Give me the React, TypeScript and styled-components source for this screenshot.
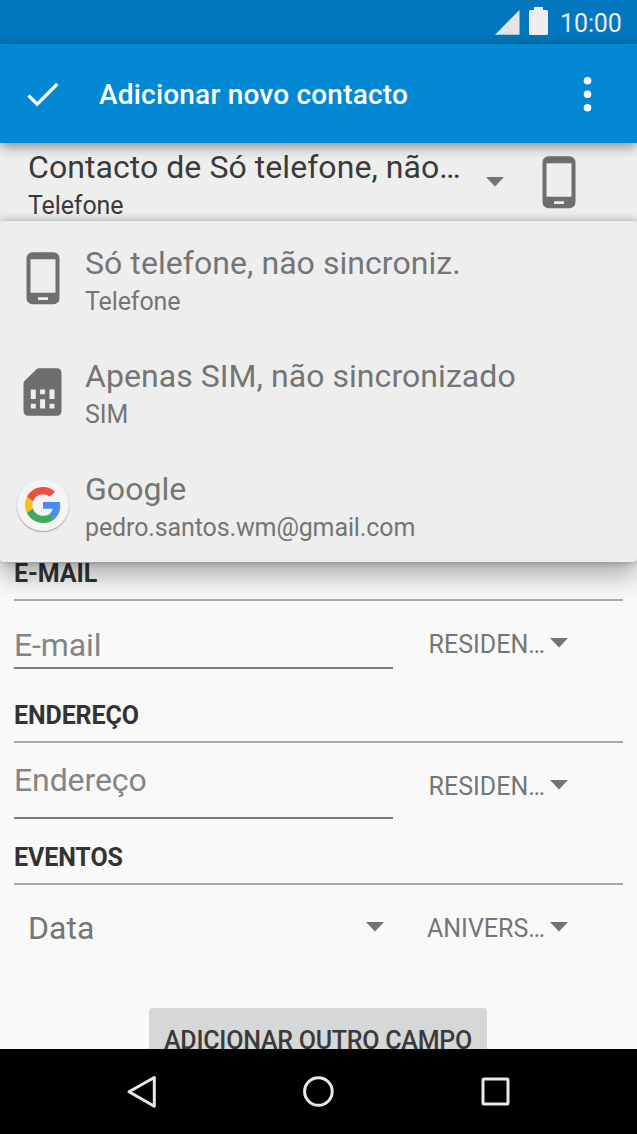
import styled, { createGlobalStyle } from "styled-components";

const GlobalStyle = createGlobalStyle`
	* {
		box-sizing: border-box;
	}

	body {
		margin: 0;
		font-family: Roboto, "Liberation Sans", sans-serif;
		background: #000;
	}

	svg {
		display: block;
		flex: none;
	}
`;

const Screen = styled.div`
	width: 637px;
	height: 1134px;
	display: flex;
	flex-direction: column;
	overflow: hidden;
	background: #f9f9f9;
`;

const StatusBar = styled.div`
	flex: none;
	height: 44px;
	padding-right: 15px;
	display: flex;
	align-items: center;
	justify-content: flex-end;
	background: #0277bd;
	color: #e3eef6;
	font-size: 25px;
	line-height: 42px;
`;

const Clock = styled.span`
	width: 62px;
	margin-left: 12px;
	letter-spacing: -0.1px;
	padding-top: 4px;
`;

const Toolbar = styled.header`
	position: relative;
	z-index: 1;
	flex: none;
	height: 99px;
	padding: 0 32px 0 21px;
	display: flex;
	align-items: center;
	background: #0388d3;
	color: #fff;
	box-shadow: 0 3px 12px rgba(0, 0, 0, 0.45);
`;

const ToolbarTitle = styled.h1`
	flex: 1;
	margin: 2px 0 0 34px;
	font-size: 28px;
	font-weight: 500;
	line-height: 40px;
	letter-spacing: 0.2px;
`;

const IconButton = styled.button`
	padding: 0;
	border: none;
	background: none;
	color: inherit;
`;

const Content = styled.main`
	position: relative;
	flex: 1;
	min-height: 0;
	overflow: hidden;
`;

const AccountHeader = styled.div`
	height: 78px;
	padding: 5px 61px 0 28px;
	display: flex;
	align-items: flex-start;
	background: #eee;
	color: #3a3a3a;
`;

const AccountText = styled.div`
	flex: 1;
	min-width: 0;
`;

const AccountName = styled.div`
	font-size: 32px;
	line-height: 39px;
	letter-spacing: 0.06px;
	white-space: nowrap;
`;

const AccountDetail = styled.div`
	font-size: 25px;
	line-height: 37px;
	letter-spacing: -0.12px;
	white-space: nowrap;
`;

const HeaderArrow = styled.div`
	margin: 29px 38px 0 0;
`;

const HeaderIcon = styled.div`
	margin-top: 8px;
`;

const AccountMenu = styled.div`
	position: absolute;
	top: 78px;
	left: 0;
	right: 0;
	height: 341px;
	padding-top: 1px;
	display: grid;
	grid-template-rows: repeat(3, 1fr);
	border-radius: 4px;
	background: #eee;
	color: #757575;
	box-shadow: 0 14px 26px rgba(0, 0, 0, 0.3), 0 0 9px rgba(0, 0, 0, 0.28);
`;

const MenuItem = styled.div`
	display: grid;
	grid-template-columns: 85px 1fr;
	align-items: center;
`;

const MenuIcon = styled.div`
	display: flex;
	justify-content: center;
`;

const MenuText = styled.div`
	padding-top: 6px;
`;

const Form = styled.div`
	padding: 338px 14px 0;
`;

const SectionTitle = styled.h2`
	height: 42px;
	margin: 0;
	padding-top: 1px;
	border-bottom: 2px solid #a9a9a9;
	color: #333;
	font-size: 25px;
	font-weight: 700;
	line-height: 28px;
	letter-spacing: -0.1px;
`;

const FieldRow = styled.div`
	height: 100px;
	display: grid;
	grid-template-columns: 379px 1fr;
	align-items: start;
	column-gap: 36px;
	color: #757575;
`;

const TextField = styled.div<{ $height: number; $top: number }>`
	height: ${({ $height }) => $height}px;
	padding-top: ${({ $top }) => $top}px;
	border-bottom: 2px solid #7c7c7c;
	color: #858585;
	font-size: 32px;
	line-height: 38px;
	letter-spacing: -0.1px;
`;

const DateSpinner = styled.div`
	padding: 23px 9px 0 14px;
	display: flex;
	align-items: center;
	justify-content: space-between;
	font-size: 32px;
	line-height: 40px;
`;

const TypeSpinner = styled.div`
	width: 139px;
	padding-top: 27px;
	display: flex;
	align-items: center;
	justify-content: flex-end;
	gap: 5px;
	font-size: 25px;
	line-height: 34px;
`;

const SpinnerArrow = styled.div<{ $lift: number }>`
	margin-top: -${({ $lift }) => $lift}px;
`;

const AddFieldButton = styled.button`
	display: block;
	width: 338px;
	height: 64px;
	margin: 23px 0 0 135px;
	padding: 2px 0 0;
	border: none;
	border-radius: 4px;
	background: #d6d7d7;
	color: #3a3a3a;
	font-family: inherit;
	font-size: 25px;
	font-weight: 500;
	line-height: 62px;
	letter-spacing: -0.24px;
	white-space: nowrap;
`;

const NavigationBar = styled.nav`
	position: relative;
	flex: none;
	height: 85px;
	padding: 0 52px;
	display: grid;
	grid-template-columns: repeat(3, 1fr);
	align-items: center;
	justify-items: center;
	background: #000;
`;

function Arrow() {
	return (
		<svg width="18" height="10" viewBox="0 0 18 10">
			<path d="M0 0h18L9 9.6z" fill="#747474" />
		</svg>
	);
}

function PhoneIcon() {
	return (
		<svg width="34" height="53" viewBox="0 0 34 53">
			<path
				fill="#6e6e6e"
				fillRule="evenodd"
				d="M6.5.3h21A6 6 0 0 1 33.5 6.3v40a6 6 0 0 1-6 6h-21a6 6 0 0 1-6-6v-40a6 6 0 0 1 6-6zM4.5 7.2v33.5h25V7.2zM12 45.2v2.8h10v-2.8z"
			/>
		</svg>
	);
}

function SimIcon() {
	return (
		<svg width="39" height="48" viewBox="0 0 39 48">
			<path
				fill="#6e6e6e"
				fillRule="evenodd"
				d="M16 .3h18a4.5 4.5 0 0 1 4.5 4.5v38.4a4.5 4.5 0 0 1-4.5 4.5H5a4.5 4.5 0 0 1-4.5-4.5V15.5a4 4 0 0 1 1.2-2.8L13.2 1.5A4 4 0 0 1 16 .3zM7.8 21.6v9.4h5v-9.4zM7.8 35.8v4.7h5v-4.7zM17.1 21.6v4.7h5v-4.7zM17.1 31.2v9.3h5v-9.3zM26.5 21.6v9.4h5v-9.4zM26.5 35.8v4.7h5v-4.7z"
			/>
		</svg>
	);
}

const GoogleBadge = styled.div`
	width: 52px;
	height: 52px;
	display: flex;
	align-items: center;
	justify-content: center;
	border-radius: 50%;
	background: #f4f4f4;
	box-shadow: 0 1px 1.5px rgba(0, 0, 0, 0.35);
`;

function GoogleIcon() {
	return (
		<GoogleBadge>
			<svg width="36" height="36" viewBox="0 0 48 48">
				<path fill="#e94f43" d="M24 9.5c3.54 0 6.71 1.22 9.21 3.6l6.85-6.85C35.9 2.38 30.47 0 24 0 14.62 0 6.51 5.38 2.56 13.22l7.98 6.19C12.43 13.72 17.74 9.5 24 9.5z" />
				<path fill="#4b8af1" d="M46.98 24.55c0-1.57-.15-3.09-.38-4.55H24v9.02h12.94c-.58 2.96-2.26 5.48-4.78 7.18l7.73 6c4.51-4.18 7.09-10.36 7.09-17.65z" />
				<path fill="#fabf1b" d="M10.53 28.59c-.48-1.45-.76-2.99-.76-4.59s.27-3.14.76-4.59l-7.98-6.19C.92 16.46 0 20.12 0 24c0 3.88.92 7.54 2.56 10.78l7.97-6.19z" />
				<path fill="#3daa59" d="M24 48c6.48 0 11.93-2.13 15.89-5.81l-7.73-6c-2.15 1.45-4.92 2.3-8.16 2.3-6.26 0-11.57-4.22-13.47-9.91l-7.98 6.19C6.51 42.62 14.62 48 24 48z" />
			</svg>
		</GoogleBadge>
	);
}

const accounts = [
	{ name: "Só telefone, não sincroniz.", detail: "Telefone", icon: <PhoneIcon /> },
	{ name: "Apenas SIM, não sincronizado", detail: "SIM", icon: <SimIcon /> },
	{ name: "Google", detail: "pedro.santos.wm@gmail.com", icon: <GoogleIcon /> },
];

function TypeSelect({ label }: { label: string }) {
	return (
		<TypeSpinner>
			<span>{label}</span>
			<SpinnerArrow $lift={4}>
				<Arrow />
			</SpinnerArrow>
		</TypeSpinner>
	);
}

export default function App() {
	return (
		<>
			<GlobalStyle />
			<Screen>
				<StatusBar>
					<svg width="54" height="44" viewBox="0 0 54 44" fill="#eee">
						<path d="M25.5 10v24.7H1z" fill="#e4e4e4" />
						<path d="M40 7h9v3h3.5a1.5 1.5 0 0 1 1.5 1.5v22a1.5 1.5 0 0 1-1.5 1.5h-16a1.5 1.5 0 0 1-1.5-1.5v-22a1.5 1.5 0 0 1 1.5-1.5H40z" />
					</svg>
					<Clock>10:00</Clock>
				</StatusBar>

				<Toolbar>
					<IconButton aria-label="Guardar">
						<svg width="44" height="44" viewBox="0 0 44 44">
							<path d="M7.5 23.5l8.7 8.7L36.3 12" fill="none" stroke="#fff" strokeWidth="3.2" />
						</svg>
					</IconButton>
					<ToolbarTitle>Adicionar novo contacto</ToolbarTitle>
					<IconButton aria-label="Mais opções">
						<svg width="36" height="44" viewBox="0 0 36 44" fill="#fff">
							<circle cx="18.5" cy="8.7" r="3.8" />
							<circle cx="18.5" cy="22.2" r="3.8" />
							<circle cx="18.5" cy="35.7" r="3.8" />
						</svg>
					</IconButton>
				</Toolbar>

				<Content>
					<AccountHeader>
						<AccountText>
							<AccountName>Contacto de Só telefone, não…</AccountName>
							<AccountDetail>Telefone</AccountDetail>
						</AccountText>
						<HeaderArrow>
							<Arrow />
						</HeaderArrow>
						<HeaderIcon>
							<PhoneIcon />
						</HeaderIcon>
					</AccountHeader>

					<Form>
						<SectionTitle>E-MAIL</SectionTitle>
						<FieldRow>
							<TextField $height={68} $top={25}>E-mail</TextField>
							<TypeSelect label="RESIDEN…" />
						</FieldRow>

						<SectionTitle>ENDEREÇO</SectionTitle>
						<FieldRow>
							<TextField $height={76} $top={18}>Endereço</TextField>
							<TypeSelect label="RESIDEN…" />
						</FieldRow>

						<SectionTitle>EVENTOS</SectionTitle>
						<FieldRow>
							<DateSpinner>
								<span>Data</span>
								<SpinnerArrow $lift={2}>
									<Arrow />
								</SpinnerArrow>
							</DateSpinner>
							<TypeSelect label="ANIVERS…" />
						</FieldRow>

						<AddFieldButton>ADICIONAR OUTRO CAMPO</AddFieldButton>
					</Form>

					<AccountMenu>
						{accounts.map((account) => (
							<MenuItem key={account.name}>
								<MenuIcon>{account.icon}</MenuIcon>
								<MenuText>
									<AccountName>{account.name}</AccountName>
									<AccountDetail>{account.detail}</AccountDetail>
								</MenuText>
							</MenuItem>
						))}
					</AccountMenu>
				</Content>

				<NavigationBar>
					<svg width="36" height="40" viewBox="0 0 36 40">
						<path d="M31.3 5.5v28.8L6 19.8z" fill="none" stroke="#e8e8e8" strokeWidth="3" strokeLinejoin="round" />
					</svg>
					<svg width="36" height="40" viewBox="0 0 36 40">
						<circle cx="18.4" cy="19.5" r="13.8" fill="none" stroke="#e8e8e8" strokeWidth="3" />
					</svg>
					<svg width="36" height="40" viewBox="0 0 36 40">
						<rect x="5" y="7" width="25" height="25" rx="1" fill="none" stroke="#e8e8e8" strokeWidth="3" />
					</svg>
				</NavigationBar>
			</Screen>
		</>
	);
}
